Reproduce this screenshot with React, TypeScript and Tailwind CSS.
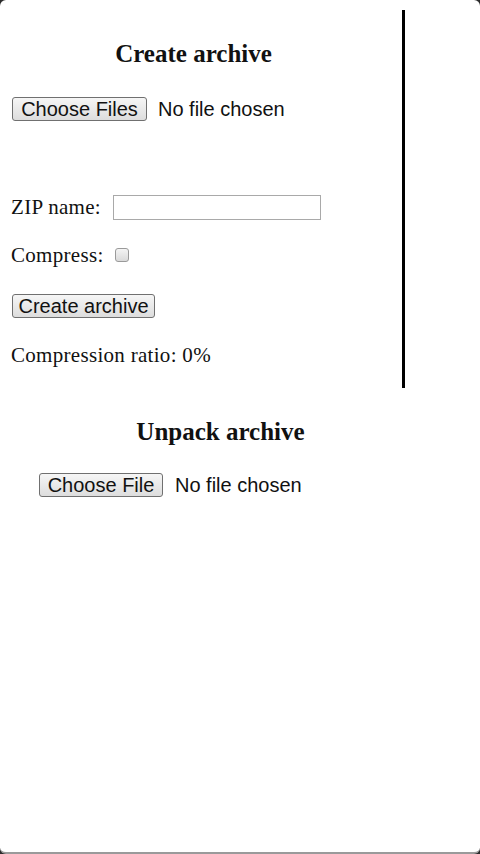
import React from "react";

const serif = { fontFamily: '"Liberation Serif", "Times New Roman", serif' };
const sans = { fontFamily: '"Liberation Sans", Arial, sans-serif' };

function Btn({ label, w }: { label: string; w: string }) {
  return (
    <button
      type="button"
      className={`${w} h-[24px] shrink-0 rounded-[3px] border border-[#707070] bg-gradient-to-b from-[#f6f6f6] to-[#dddddd] text-[20px] leading-[22px] text-[#111] text-center p-0`}
      style={sans}
    >
      {label}
    </button>
  );
}

export default function App() {
  return (
    <div className="w-[480px] h-[854px] bg-[#2b2b2b]">
      <div className="flex flex-col w-full h-full bg-white rounded-[6px] border-b-2 border-[#9a9a9a] overflow-hidden">
        <div
          className="flex flex-col w-[405px] mt-[10px] border-r-[3px] border-black pl-[11px] pr-[26px] pt-[30px] pb-[20px] text-[#111]"
          style={serif}
        >
          <h2 className="text-[25px] leading-[28px] font-bold text-center">Create archive</h2>
          <div className="mt-[29px] flex items-center h-[24px] pl-[1px]">
            <Btn label="Choose Files" w="w-[135px]" />
            <span className="ml-[11px] text-[20px] leading-[22px] whitespace-nowrap" style={sans}>
              No file chosen
            </span>
          </div>
          <div className="mt-[74px] flex items-center h-[25px] text-[21px] leading-[25px] tracking-[0.3px]">
            <span className="w-[102px] shrink-0 whitespace-nowrap">ZIP name:</span>
            <input
              type="text"
              className="w-[208px] h-[25px] border border-[#a9a9a9] bg-white outline-none"
            />
          </div>
          <div className="mt-[23px] flex items-start h-[25px] text-[21px] leading-[25px] tracking-[0.3px]">
            <span className="w-[104px] shrink-0 whitespace-nowrap">Compress:</span>
            <span className="mt-[5px] w-[14px] h-[14px] rounded-[3px] border border-[#9a9a9a] bg-gradient-to-b from-[#f4f4f4] to-[#dadada]" />
          </div>
          <div className="mt-[26px] flex h-[24px] pl-[1px]">
            <Btn label="Create archive" w="w-[143px]" />
          </div>
          <div className="mt-[25px] text-[21px] leading-[25px] tracking-[0.3px] whitespace-nowrap">
            Compression ratio: 0%
          </div>
        </div>
        <div className="flex flex-col w-[402px] pl-[39px] pt-[30px] text-[#111]" style={serif}>
          <h2 className="text-[25px] leading-[28px] font-bold text-center">Unpack archive</h2>
          <div className="mt-[27px] flex items-center h-[24px]">
            <Btn label="Choose File" w="w-[124px]" />
            <span className="ml-[12px] text-[20px] leading-[22px] whitespace-nowrap" style={sans}>
              No file chosen
            </span>
          </div>
        </div>
      </div>
    </div>
  );
}
